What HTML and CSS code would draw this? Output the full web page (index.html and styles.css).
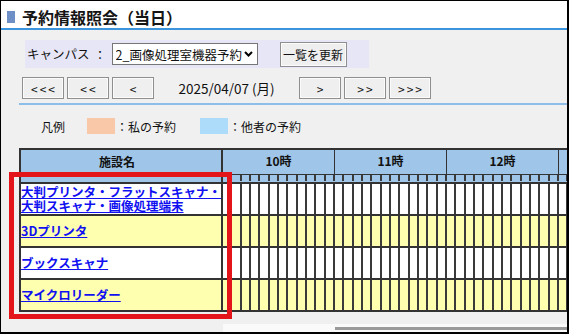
FILE: index.html
```html
<!DOCTYPE html>
<html lang="ja">
<head>
<meta charset="utf-8">
<title>予約情報照会（当日）</title>
<link rel="stylesheet" href="styles.css">
</head>
<body>
<div class="frame">
  <header class="titlebar">
    <span class="title-mark"></span>
    <h1 class="title">予約情報照会（当日）</h1>
  </header>
  <main class="content">
    <div class="campus">
      <span class="campus-label">キャンパス</span>
      <span class="campus-colon">：</span>
      <div class="select">
        <span class="select-value">2_画像処理室機器予約</span>
        <svg class="select-arrow" width="9" height="6" viewBox="0 0 9 6"><polyline points="1,1 4.5,4.5 8,1" fill="none" stroke="#000" stroke-width="2"/></svg>
      </div>
      <button class="btn btn-refresh">一覧を更新</button>
    </div>
    <div class="nav">
      <button class="btn btn-nav">&lt;&lt;&lt;</button>
      <button class="btn btn-nav">&lt;&lt;</button>
      <button class="btn btn-nav">&lt;</button>
      <span class="date">2025/04/07 (月)</span>
      <button class="btn btn-nav">&gt;</button>
      <button class="btn btn-nav">&gt;&gt;</button>
      <button class="btn btn-nav">&gt;&gt;&gt;</button>
    </div>
    <div class="rule"></div>
    <div class="legend">
      <span class="legend-title">凡例</span>
      <span class="swatch swatch-mine"></span><span class="legend-text">：私の予約</span>
      <span class="swatch swatch-other"></span><span class="legend-text">：他者の予約</span>
    </div>
    <div class="schedule">
      <div class="sched-head">
        <div class="head-name">施設名</div>
        <div class="head-time">
          <div class="hours">
            <div class="hour">10時</div>
            <div class="hour">11時</div>
            <div class="hour">12時</div>
            <div class="hour"></div>
          </div>
          <div class="ticks"></div>
        </div>
      </div>
      <div class="row row-white">
        <div class="name"><a href="#" class="facility">大判プリンタ・フラットスキャナ・<br>大判スキャナ・画像処理端末</a></div>
        <div class="slots"></div>
      </div>
      <div class="row row-yellow">
        <div class="name"><a href="#" class="facility">3Dプリンタ</a></div>
        <div class="slots"></div>
      </div>
      <div class="row row-white">
        <div class="name"><a href="#" class="facility">ブックスキャナ</a></div>
        <div class="slots"></div>
      </div>
      <div class="row row-yellow row-last">
        <div class="name"><a href="#" class="facility">マイクロリーダー</a></div>
        <div class="slots"></div>
      </div>
    </div>
    <div class="hscroll"><div class="hscroll-thumb"></div></div>
  </main>
  <div class="highlight"></div>
</div>
</body>
</html>
```
FILE: styles.css
```css
* { box-sizing: border-box; }
html, body { margin: 0; padding: 0; }
body {
  width: 569px;
  height: 334px;
  overflow: hidden;
  font-family: "Noto Sans CJK JP", "Noto Sans", sans-serif;
  color: #111;
}
.frame {
  position: relative;
  width: 569px;
  height: 334px;
  border: 1px solid #000;
  border-right-width: 2px;
  border-bottom-width: 2px;
  background: #f0f0f0;
  overflow: hidden;
}
.titlebar {
  height: 29px;
  background: #fff;
  border-bottom: 2px solid #3c95dc;
  display: flex;
  align-items: center;
  padding: 5px 0 0 6px;
}
.title-mark {
  width: 8px;
  height: 12px;
  background: #6f8fc7;
  margin-right: 7px;
}
.title {
  margin: 0;
  font-size: 16px;
  line-height: 18px;
  font-weight: bold;
  color: #151515;
}
.content {
  padding-left: 18px;
}
.campus {
  margin: 10px 0 0 6px;
  width: 344px;
  height: 28px;
  background: #e6e6f6;
  display: flex;
  align-items: center;
  padding-left: 2px;
  font-size: 12.5px;
}
.campus-label { line-height: 16px; }
.campus-colon { width: 13px; margin: 0 5px 0 4px; text-align: center; }
.select {
  width: 146px;
  height: 22px;
  flex: none;
  background: #fff;
  border: 1px solid #767676;
  display: flex;
  align-items: center;
  justify-content: space-between;
  padding: 0 4px 0 3px;
  font-size: 12.5px;
}
.select-value { white-space: nowrap; overflow: hidden; }
.select-arrow { display: block; flex: none; margin-left: 2px; }
.btn {
  font-family: inherit;
  background: #efefef;
  border: 1px solid #8f8f8f;
  box-shadow: inset 0 0 0 1px #fbfbfb;
  color: #111;
  padding: 0;
  margin: 0;
}
.btn-refresh {
  margin-left: 22px;
  width: 67px;
  height: 25px;
  font-size: 12px;
  flex: none;
}
.nav {
  display: flex;
  align-items: center;
  gap: 3px;
  margin: 9px 0 0 3px;
  height: 22px;
}
.btn-nav {
  width: 42px;
  height: 22px;
  font-size: 12px;
  letter-spacing: 2px;
  padding-left: 2px;
}
.date {
  width: 139px;
  text-align: center;
  font-size: 13.5px;
}
.rule {
  height: 2px;
  background: #8dbde9;
  margin-top: 4px;
}
.legend {
  display: flex;
  align-items: center;
  height: 16px;
  margin-top: 13px;
  padding-left: 22px;
  font-size: 12px;
}
.legend-title { margin-right: 22px; }
.swatch { width: 28px; height: 16px; }
.swatch-mine { background: #f8c8a8; }
.swatch-other { background: #acdcfa; margin-left: 24px; }
.legend-text { margin-left: 1px; }
.schedule {
  margin-top: 14px;
  width: 700px;
}
.sched-head {
  display: flex;
  border-top: 2px solid #333;
  background: #9fc5e8;
  height: 34px;
}
.head-name {
  width: 204px;
  flex: none;
  border-left: 2px solid #333;
  border-right: 2px solid #333;
  text-align: center;
  padding: 4px 8px 0 0;
  font-size: 12px;
  line-height: 16px;
  font-weight: bold;
}
.head-time { flex: none; width: 448px; }
.hours { display: flex; height: 25px; border-bottom: 1px solid #333; }
.hour {
  width: 112px;
  flex: none;
  text-align: center;
  font-size: 12px;
  font-weight: bold;
  line-height: 22px;
  border-right: 1px solid #333;
}
.ticks {
  height: 6px;
  background-image: repeating-linear-gradient(90deg, transparent 0 7.333px, #3a3a3a 7.333px 9.333px);
}
.row {
  display: flex;
  height: 32px;
  border-top: 2px solid #333;
}
.row-last { height: 34px; border-bottom: 2px solid #333; }
.row-white { background: #fff; }
.row-yellow { background: #ffffb0; }
.name {
  width: 204px;
  flex: none;
  border-left: 2px solid #333;
  border-right: 2px solid #333;
  display: flex;
  align-items: center;
  padding-left: 0;
}
.facility {
  color: #1010f0;
  font-weight: bold;
  font-size: 12.5px;
  line-height: 14px;
  white-space: nowrap;
  text-decoration: underline;
}
.slots {
  flex: none;
  width: 448px;
  background-image: repeating-linear-gradient(90deg, transparent 0 7.333px, #3a3a3a 7.333px 9.333px);
}
.hscroll {
  margin: 12px 0 0 204px;
  height: 8px;
  background: #fafafa;
  position: relative;
}
.hscroll-thumb {
  position: absolute;
  left: 112px;
  right: 0;
  top: 3px;
  height: 3px;
  background: #9a9a9a;
}
.highlight {
  position: absolute;
  left: 8px;
  top: 171px;
  width: 223px;
  height: 147px;
  border: 5px solid #e4141b;
}
```
